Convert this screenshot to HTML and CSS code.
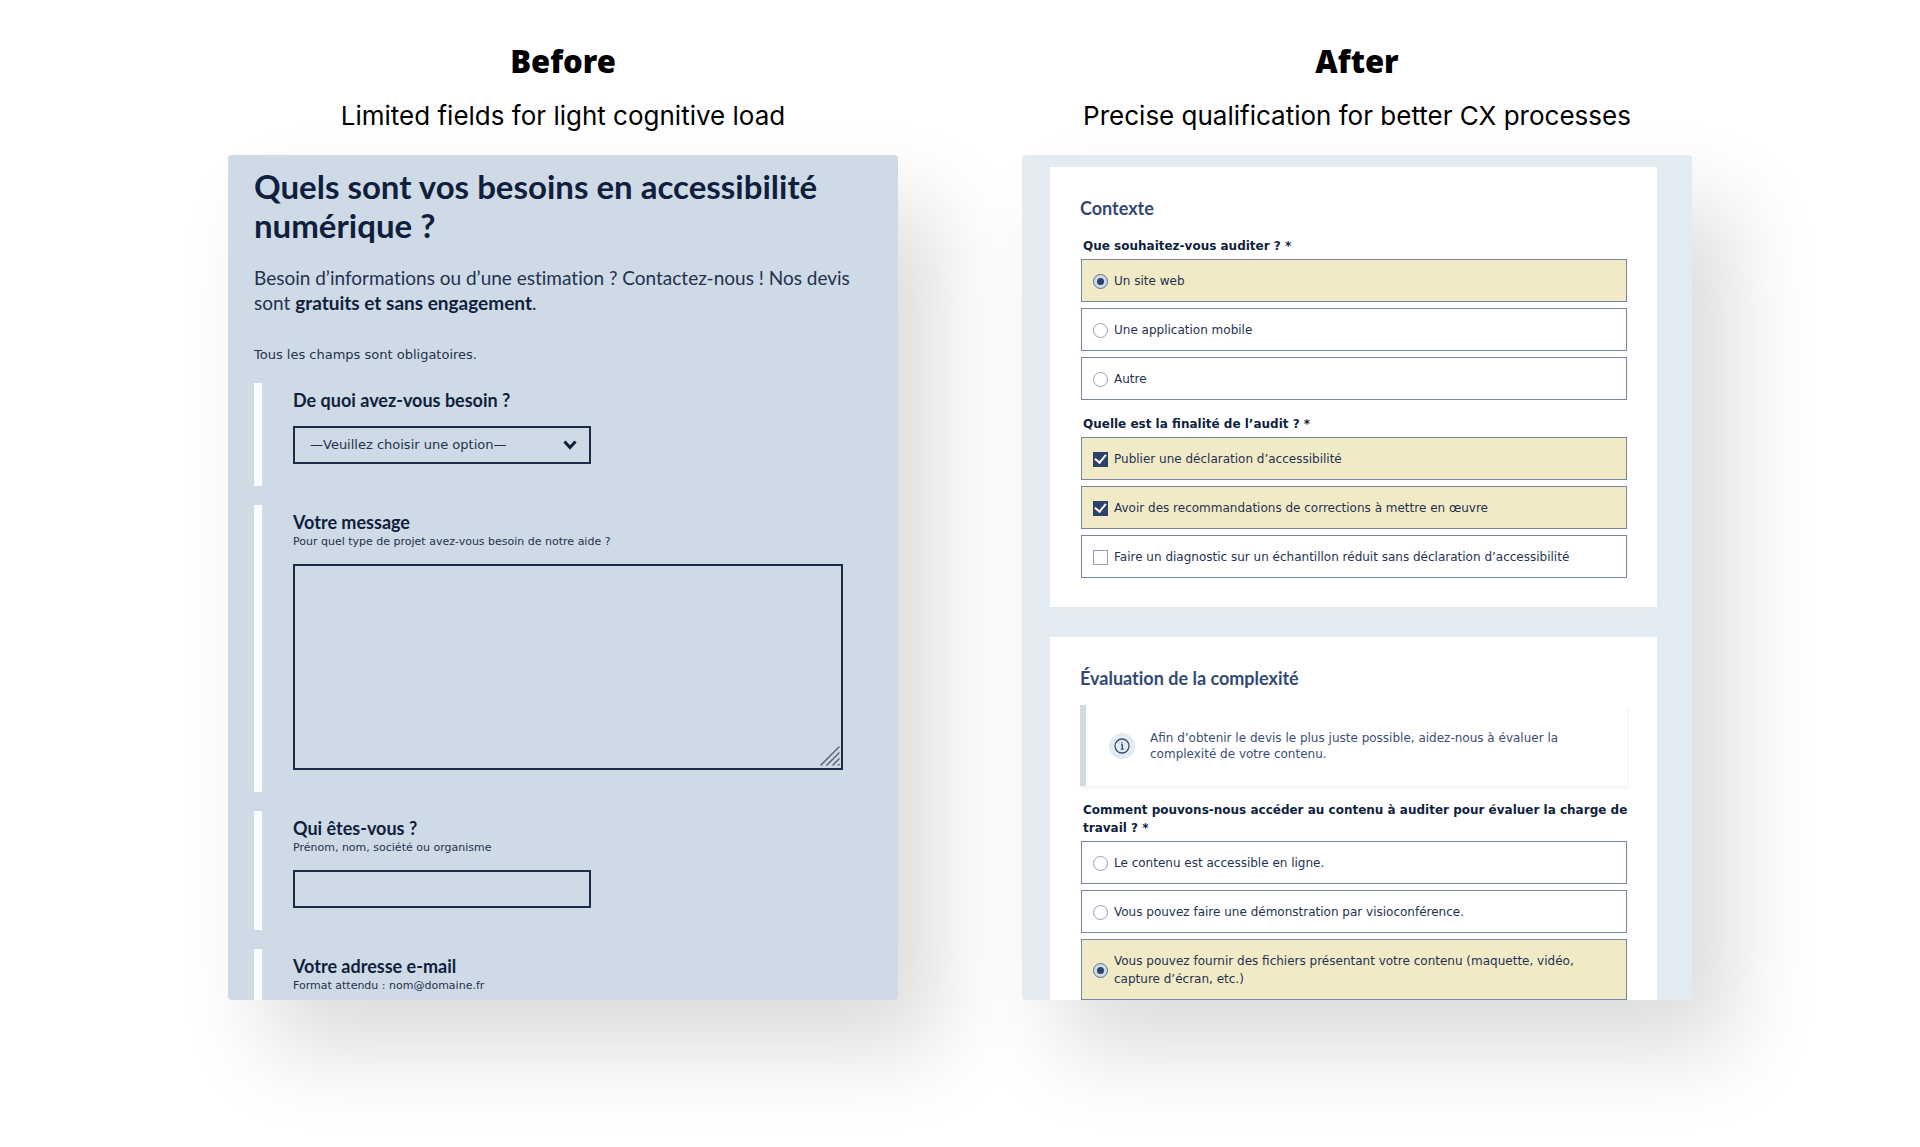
FILE: index.html
```html
<!DOCTYPE html>
<html lang="en">
<head>
<meta charset="utf-8">
<meta name="viewport" content="width=device-width, initial-scale=1">
<title>Before / After</title>
<link rel="stylesheet" href="styles.css">
</head>
<body>
<main class="comparison">
  <section class="side">
    <h1 class="side-title">Before</h1>
    <p class="side-caption">Limited fields for light cognitive load</p>
    <form class="card card-before" lang="fr">
      <h2 class="headline">Quels sont vos besoins en accessibilité numérique ?</h2>
      <p class="intro">Besoin d’informations ou d’une estimation ? Contactez-nous ! Nos devis sont <strong>gratuits et sans engagement</strong>.</p>
      <p class="notice">Tous les champs sont obligatoires.</p>
      <div class="fields">
        <div class="field">
          <label class="field-label" for="need">De quoi avez-vous besoin ?</label>
          <div class="select-wrap">
            <select class="control select" id="need"><option>—Veuillez choisir une option—</option></select>
            <svg class="chevron" viewBox="0 0 14 10" aria-hidden="true"><path d="M1.5 1.5 7 7.5l5.5-6"/></svg>
          </div>
        </div>
        <div class="field">
          <label class="field-label" for="message">Votre message</label>
          <p class="hint">Pour quel type de projet avez-vous besoin de notre aide ?</p>
          <div class="textarea-wrap">
            <textarea class="control textarea" id="message"></textarea>
            <svg class="grip" viewBox="0 0 20 20" aria-hidden="true"><path d="M.5 19.500 19.500.5M6.500 19.500l13-13M12.500 19.500l7-7M18 19.500l1.500-1.500"/></svg>
          </div>
        </div>
        <div class="field">
          <label class="field-label" for="name">Qui êtes-vous ?</label>
          <p class="hint">Prénom, nom, société ou organisme</p>
          <input class="control" id="name" type="text">
        </div>
        <div class="field">
          <label class="field-label" for="email">Votre adresse e-mail</label>
          <p class="hint">Format attendu : nom@domaine.fr</p>
          <input class="control" id="email" type="email">
        </div>
      </div>
    </form>
  </section>

  <section class="side">
    <h1 class="side-title">After</h1>
    <p class="side-caption">Precise qualification for better CX processes</p>
    <form class="card card-after" lang="fr">
      <section class="panel">
        <h2 class="panel-title">Contexte</h2>
        <fieldset class="group">
          <legend class="question">Que souhaitez-vous auditer ? *</legend>
          <div class="options">
            <label class="option"><input class="tick radio" type="radio" name="subject" checked>Un site web</label>
            <label class="option"><input class="tick radio" type="radio" name="subject">Une application mobile</label>
            <label class="option"><input class="tick radio" type="radio" name="subject">Autre</label>
          </div>
        </fieldset>
        <fieldset class="group">
          <legend class="question">Quelle est la finalité de l’audit ? *</legend>
          <div class="options">
            <label class="option"><input class="tick checkbox" type="checkbox" checked>Publier une déclaration d’accessibilité</label>
            <label class="option"><input class="tick checkbox" type="checkbox" checked>Avoir des recommandations de corrections à mettre en œuvre</label>
            <label class="option"><input class="tick checkbox" type="checkbox">Faire un diagnostic sur un échantillon réduit sans déclaration d’accessibilité</label>
          </div>
        </fieldset>
      </section>
      <section class="panel">
        <h2 class="panel-title">Évaluation de la complexité</h2>
        <div class="info">
          <svg class="info-icon" viewBox="0 0 26 26" aria-hidden="true">
            <circle class="info-disc" cx="13" cy="13" r="13"/>
            <circle class="info-ring" cx="13" cy="13" r="7"/>
            <path class="info-mark" d="M12 12h1.300v4M11.800 16.200h3M13 9.200v1.300"/>
          </svg>
          <p class="info-text">Afin d’obtenir le devis le plus juste possible, aidez-nous à évaluer la complexité de votre contenu.</p>
        </div>
        <fieldset class="group">
          <legend class="question">Comment pouvons-nous accéder au contenu à auditer pour évaluer la charge de travail ? *</legend>
          <div class="options">
            <label class="option"><input class="tick radio" type="radio" name="access">Le contenu est accessible en ligne.</label>
            <label class="option"><input class="tick radio" type="radio" name="access">Vous pouvez faire une démonstration par visioconférence.</label>
            <label class="option"><input class="tick radio" type="radio" name="access" checked>Vous pouvez fournir des fichiers présentant votre contenu (maquette, vidéo, capture d’écran, etc.)</label>
          </div>
        </fieldset>
      </section>
    </form>
  </section>
</main>
</body>
</html>
```
FILE: styles.css
```css
:root {
  --navy: #0f1f3d;
  --ink: #24324f;
  --slate: #324a73;
  --mist: #cedae6;
  --pale: #e2eaf2;
  --sand: #f1eac7;
  --line: #7885a3;
  --display: Lato, "Open Sans", sans-serif;
  --text: "DejaVu Sans", Verdana, sans-serif;
}

* { box-sizing: border-box; }

body {
  margin: 0;
  background: #fff;
  color: #000;
  font-family: var(--text);
}

h1, h2, p { margin: 0; }

.comparison {
  display: grid;
  grid-template-columns: minmax(0, 1fr) minmax(0, 1fr);
  gap: 124px;
  max-width: 1464px;
  margin: 0 auto;
  padding: 41px 0 147px;
}

.side-title {
  font: 900 31px/40px "Noto Sans", sans-serif;
  text-align: center;
}

.side-caption {
  margin: 15px 0 19px;
  font: 400 26px/40px Inter, sans-serif;
  text-align: center;
}

.card {
  aspect-ratio: 670 / 845;
  overflow: hidden;
  border-radius: 4px;
  box-shadow: 40px 50px 90px rgba(0, 0, 0, .14);
}

/* Before: long single form */
.card-before {
  padding: 12px 26px 0;
  background: var(--mist);
  color: var(--ink);
}

.headline {
  color: var(--navy);
  font: 700 33px/39px var(--display);
}

.intro {
  margin-top: 20px;
  font: 400 19px/25px var(--display);
  font-variant-ligatures: none;
}

.intro strong { color: var(--navy); }

.notice {
  margin-top: 30px;
  font-size: 13px;
  line-height: 20px;
}

.fields {
  display: grid;
  gap: 19px;
  margin-top: 18px;
}

.field {
  padding: 6px 0 22px 31px;
  border-left: 8px solid #fafcfe;
}

.field-label {
  display: block;
  color: var(--navy);
  font: 700 18px/22px var(--display);
}

.hint {
  font-size: 11px;
  line-height: 18px;
}

.control {
  display: block;
  width: 298px;
  height: 38px;
  margin-top: 13px;
  padding: 0 15px;
  border: 2px solid #1c2b49;
  border-radius: 0;
  background: transparent;
  color: var(--ink);
  font: 400 13px/20px var(--text);
}

.select-wrap {
  position: relative;
  width: 298px;
  margin-top: 15px;
}

.select {
  margin: 0;
  appearance: none;
}

.chevron {
  position: absolute;
  right: 14px;
  top: 14px;
  width: 14px;
  height: 10px;
  fill: none;
  stroke: var(--navy);
  stroke-width: 3;
  pointer-events: none;
}

.textarea-wrap {
  position: relative;
  width: 95%;
}

.textarea {
  width: 100%;
  height: 206px;
  resize: none;
}

.grip {
  position: absolute;
  right: 3px;
  bottom: 4px;
  width: 20px;
  height: 20px;
  fill: none;
  stroke: #5f6872;
  stroke-width: 1.500;
  pointer-events: none;
}

/* After: grouped panels */
.card-after {
  display: flex;
  flex-direction: column;
  gap: 30px;
  padding: 12px 35px 0 28px;
  background: var(--pale);
}

.panel {
  flex: none;
  padding: 29px 30px;
  background: #fff;
}

.panel-title {
  margin-bottom: 14px;
  color: var(--slate);
  font: 700 18px/25px var(--display);
  font-variant-ligatures: none;
}

.group {
  min-width: 0;
  margin: 15px 0 0 1px;
  padding: 0;
  border: 0;
}

.panel-title + .group { margin-top: 16px; }

.question {
  margin-right: -10px;
  padding: 0 0 4px 2px;
  color: var(--navy);
  font-size: 12px;
  font-weight: 700;
  line-height: 18px;
}

.options {
  display: grid;
  gap: 6px;
}

.option {
  display: flex;
  align-items: center;
  gap: 6px;
  padding: 12px 30px 11px 11px;
  border: 1px solid var(--line);
  color: var(--ink);
  font-size: 12px;
  line-height: 18px;
}

.option:has(:checked) { background: var(--sand); }

.tick {
  display: grid;
  flex: none;
  place-items: center;
  width: 15px;
  height: 15px;
  margin: 0;
  border: 1px solid #9a9cb4;
  background: #fff;
  appearance: none;
}

.radio { border-radius: 50%; }

.radio:checked {
  border-color: #5d708f;
  background: var(--mist);
}

.radio:checked::after {
  content: "";
  width: 7px;
  height: 7px;
  border-radius: 50%;
  background: #2c426b;
}

.checkbox:checked {
  border-color: #2c426b;
  background: #2c426b;
}

.checkbox:checked::after {
  content: "";
  width: 9px;
  height: 5px;
  margin-bottom: 3px;
  border: solid #fff;
  border-width: 0 0 2px 2px;
  transform: rotate(-50deg);
}

.info {
  display: flex;
  align-items: center;
  gap: 15px;
  min-height: 81px;
  padding: 0 24px 0 23px;
  border-left: 6px solid var(--mist);
  box-shadow: 1px 2px 3px rgba(0, 0, 0, .06);
}

.info-icon {
  flex: none;
  width: 26px;
  height: 26px;
}

.info-disc { fill: var(--pale); }

.info-ring, .info-mark {
  fill: none;
  stroke: #3a4d74;
  stroke-width: 1.300;
}

.info-text {
  color: #3a4d74;
  font-size: 12px;
  line-height: 16px;
}
```
